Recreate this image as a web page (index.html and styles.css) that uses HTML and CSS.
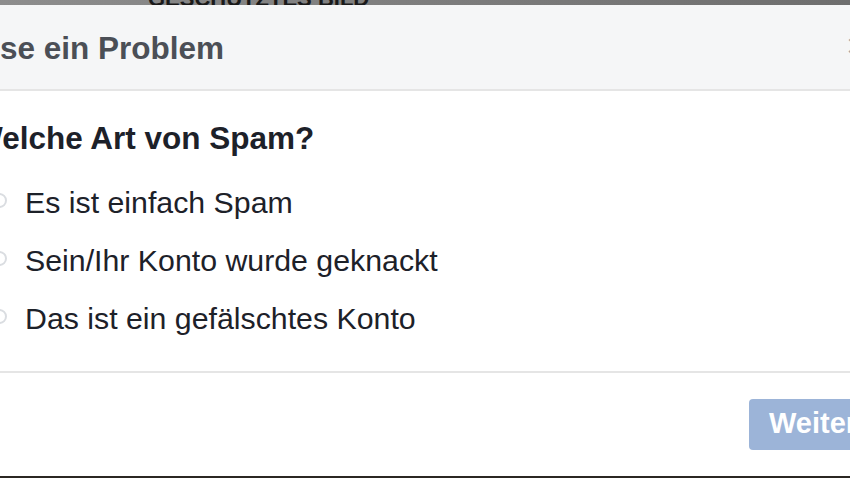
FILE: index.html
```html
<!DOCTYPE html>
<html lang="de">
<head>
  <meta charset="UTF-8">
  <title>Problem melden</title>
  <link rel="stylesheet" href="styles.css">
</head>
<body>
  <div class="backdrop">
    <span class="backdrop-text">GESCHÜTZTES BILD</span>
  </div>
  <div class="dialog">
    <div class="dialog-header">
      <h2 class="title">se ein Problem</h2>
      <span class="close">&times;</span>
    </div>
    <div class="dialog-body">
      <h3 class="question">Welche Art von Spam?</h3>
      <label class="option"><span class="radio"></span>Es ist einfach Spam</label>
      <label class="option"><span class="radio"></span>Sein/Ihr Konto wurde geknackt</label>
      <label class="option"><span class="radio"></span>Das ist ein gefälschtes Konto</label>
    </div>
    <div class="dialog-footer">
      <button class="btn-next" disabled>Weiter</button>
    </div>
  </div>
</body>
</html>
```

FILE: styles.css
```css
body {
  margin: 0;
  height: 478px;
  overflow: hidden;
  background: #2b2723;
  font-family: "Liberation Sans", Arial, sans-serif;
}
.backdrop {
  height: 5px;
  overflow: hidden;
  background: linear-gradient(90deg, #8d8d8d, #7a7a7a 60%, #6e6e6e);
  position: relative;
}
.backdrop-text {
  position: absolute;
  left: 148px;
  top: -14px;
  font-size: 22px;
  font-weight: bold;
  color: #1a1a1a;
}
.dialog {
  height: 471px;
  background: #fff;
  overflow: hidden;
}
.dialog-header {
  height: 84px;
  background: #f5f6f7;
  border-bottom: 2px solid #e5e5e5;
  display: flex;
  align-items: center;
  justify-content: space-between;
}
.title {
  margin: 0;
  font-size: 31.5px;
  font-weight: bold;
  color: #4b4f56;
  padding-top: 2px;
}
.close {
  font-size: 34px;
  color: #a0a3a8;
  margin-right: -16px;
  padding-bottom: 4px;
}
.dialog-body {
  border-bottom: 2px solid #e5e5e5;
  padding-top: 30px;
  box-sizing: border-box;
  height: 282px;
}
.question {
  margin: 0 0 19px -27px;
  font-size: 31.5px;
  font-weight: bold;
  color: #1d2129;
  line-height: 34px;
}
.option {
  display: flex;
  align-items: center;
  height: 58px;
  font-size: 30.3px;
  color: #1d2129;
}
.radio {
  width: 11px;
  height: 11px;
  border: 2px solid #dadde1;
  border-radius: 50%;
  margin-left: -8px;
  margin-right: 18px;
  margin-bottom: 6px;
}
.dialog-footer {
  display: flex;
  justify-content: flex-end;
  padding-top: 26px;
}
.btn-next {
  width: 120px;
  height: 51px;
  margin-right: -19px;
  border: none;
  border-radius: 4px;
  background: #9cb4d8;
  color: #fff;
  font-family: "Liberation Sans", Arial, sans-serif;
  font-size: 29px;
  font-weight: bold;
  text-align: left;
  padding: 0 0 2px 20px;
}
```
